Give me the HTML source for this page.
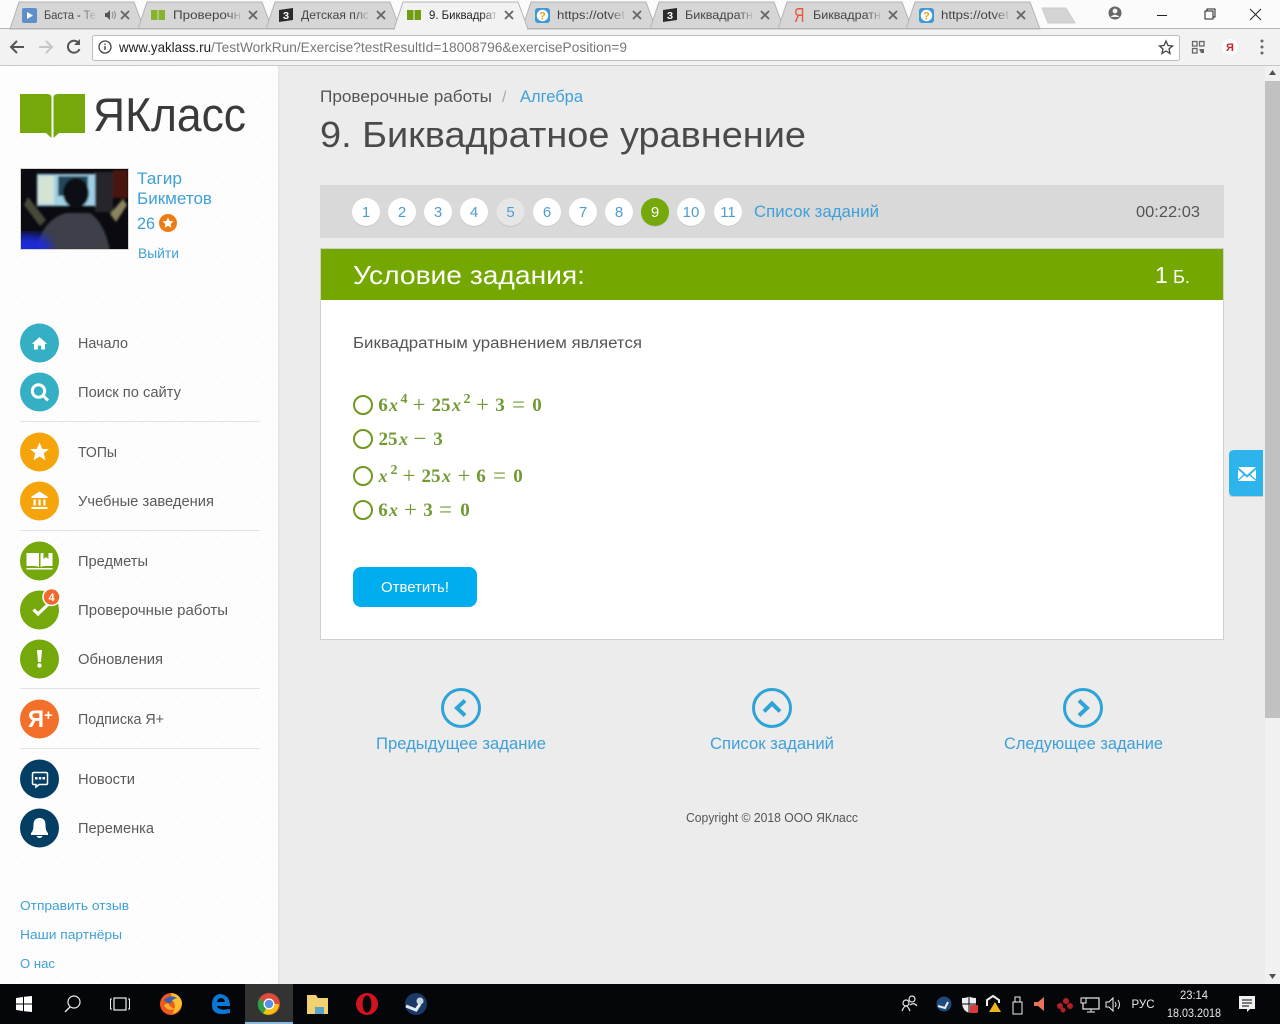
<!DOCTYPE html>
<html lang="ru"><head><meta charset="utf-8"><title>9. Биквадратное уравнение</title>
<style>
html,body{margin:0;padding:0;background:#ececec;overflow:hidden}
svg{display:block}
text{font-family:"Liberation Sans","DejaVu Sans",sans-serif}
.nav{font-size:15px;fill:#5a5a5a}
.lnk{fill:#3fa0d8}
.tab{font-size:12px;fill:#444}
.m{font-family:"Liberation Serif",serif;font-size:19px;font-weight:bold;fill:#729a33;text-anchor:middle}
.mi{font-style:italic;font-size:18px}
.s{font-size:14px}
.o{font-size:23px;font-weight:normal}
.pg{font-size:15px;fill:#4b9fd0;text-anchor:middle}
.tray{fill:#e8e8e8;font-size:12px;text-anchor:middle}
</style></head><body>
<svg width="1280" height="1024" viewBox="0 0 1280 1024" xmlns="http://www.w3.org/2000/svg">
<defs>
<pattern id="dots" width="10" height="10" patternUnits="userSpaceOnUse"><rect width="10" height="10" fill="#fdfdfd"/><rect x="2" y="2" width="1" height="1" fill="#f1f1f1"/><rect x="7" y="7" width="1" height="1" fill="#f1f1f1"/></pattern>
<linearGradient id="fg" x1="0" x2="1" y1="0" y2="0"><stop offset="0" stop-color="#d6d6d6" stop-opacity="0"/><stop offset="1" stop-color="#d6d6d6"/></linearGradient>
<linearGradient id="fa" x1="0" x2="1" y1="0" y2="0"><stop offset="0" stop-color="#f2f2f2" stop-opacity="0"/><stop offset="1" stop-color="#f2f2f2"/></linearGradient>
<linearGradient id="side" x1="0" x2="1" y1="0" y2="0"><stop offset="0" stop-color="#e4e4e4"/><stop offset="1" stop-color="#ececec"/></linearGradient>
<clipPath id="ph"><rect x="21" y="169" width="107" height="80"/></clipPath>
<filter id="b1"><feGaussianBlur stdDeviation="1"/></filter>
<filter id="b3"><feGaussianBlur stdDeviation="5"/></filter>
<g id="x"><path d="M-4-4L4 4M4-4L-4 4" stroke="#666" stroke-width="1.800" fill="none"/></g>
<g id="bk"><rect x="0" y="0" width="6.500" height="10" fill="#85b52a"/><rect x="7.500" y="0" width="6.500" height="10" fill="#85b52a"/></g>
<g id="z3"><path d="M0 2L14 0V12L0 14Z" fill="#2a2a2a"/><text x="7" y="11" font-size="10" font-weight="bold" fill="#fff" text-anchor="middle">З</text></g>
<g id="q"><rect x="0" y="0" width="15" height="15" rx="3" fill="#3d9ad6"/><circle cx="7.500" cy="7.500" r="5.700" fill="#fff"/><text x="7.500" y="11.500" font-size="11" font-weight="bold" fill="#eda21a" text-anchor="middle">?</text></g>
</defs>

<!-- page backgrounds -->
<rect width="1280" height="1024" fill="#ececec"/>
<rect x="0" y="66" width="278" height="918" fill="url(#dots)"/>
<rect x="278" y="66" width="3" height="918" fill="url(#side)"/>

<!-- Browser chrome -->
<rect width="1280" height="66" fill="#f2f2f2"/>
<rect width="1280" height="29" fill="#fbfbfb"/>
<g fill="#d6d6d6" stroke="#b4b4b4" stroke-width="1">
<path d="M10 29L19 2H134L144 29Z"/><path d="M138 29L147 2H262L272 29Z"/><path d="M266 29L275 2H390L400 29Z"/>
<path d="M522 29L531 2H646L656 29Z"/><path d="M650 29L659 2H774L784 29Z"/><path d="M778 29L787 2H902L912 29Z"/><path d="M906 29L915 2H1030L1040 29Z"/>
<path d="M1042 8H1066L1075 23H1048Z" fill="#d4d4d4" stroke="#cccccc"/>
</g>
<rect x="0" y="28" width="1280" height="1" fill="#b4b4b4"/>
<path d="M394 29L403 2H518L528 29Z" fill="#f2f2f2" stroke="#b4b4b4"/>
<rect x="395" y="28" width="132" height="2" fill="#f2f2f2"/>
<rect x="0" y="65" width="1280" height="1" fill="#c8c8c8"/>

<!-- tab favicons -->
<rect x="22" y="8" width="15" height="15" rx="2" fill="#5d8fc9"/><path d="M27 12L33 15.500L27 19Z" fill="#fff"/>
<use href="#bk" x="151" y="10"/><use href="#z3" x="279" y="8"/>
<rect x="407" y="10" width="6.500" height="10" fill="#6f9f10"/><rect x="414.500" y="10" width="6.500" height="10" fill="#6f9f10"/>
<use href="#q" x="535" y="8"/><use href="#z3" x="663" y="8"/>
<text transform="translate(794,22) scale(.72,1)" font-size="20" fill="#e8573c">Я</text>
<use href="#q" x="919" y="8"/>

<!-- tab titles -->
<text class="tab" x="44" y="19" textLength="52" lengthAdjust="spacingAndGlyphs">Баста - Те</text>
<text class="tab" x="173" y="19" textLength="68" lengthAdjust="spacingAndGlyphs">Проверочн</text>
<text class="tab" x="301" y="19" textLength="68" lengthAdjust="spacingAndGlyphs">Детская плс</text>
<text class="tab" x="429" y="19" textLength="68" lengthAdjust="spacingAndGlyphs" style="fill:#222">9. Биквадрат</text>
<text class="tab" x="557" y="19" textLength="68" lengthAdjust="spacingAndGlyphs">https://otvet</text>
<text class="tab" x="685" y="19" textLength="68" lengthAdjust="spacingAndGlyphs">Биквадратн</text>
<text class="tab" x="813" y="19" textLength="68" lengthAdjust="spacingAndGlyphs">Биквадратн</text>
<text class="tab" x="941" y="19" textLength="68" lengthAdjust="spacingAndGlyphs">https://otvet</text>
<rect x="80" y="7" width="17" height="16" fill="url(#fg)"/><rect x="226" y="7" width="17" height="16" fill="url(#fg)"/><rect x="354" y="7" width="17" height="16" fill="url(#fg)"/><rect x="482" y="7" width="17" height="16" fill="url(#fa)"/><rect x="610" y="7" width="17" height="16" fill="url(#fg)"/><rect x="738" y="7" width="17" height="16" fill="url(#fg)"/><rect x="866" y="7" width="17" height="16" fill="url(#fg)"/><rect x="994" y="7" width="17" height="16" fill="url(#fg)"/>
<use href="#x" x="125" y="15"/><use href="#x" x="253" y="15"/><use href="#x" x="381" y="15"/><use href="#x" x="509" y="15"/><use href="#x" x="637" y="15"/><use href="#x" x="765" y="15"/><use href="#x" x="893" y="15"/><use href="#x" x="1021" y="15"/>
<path d="M105 13H107L110 10V20L107 17H105Z" fill="#555"/><path d="M112 12Q114 15 112 18M114 11Q117 15 114 19" stroke="#888" fill="none"/>

<!-- window controls -->
<circle cx="1115" cy="13" r="6.500" fill="#666"/><circle cx="1115" cy="11" r="2.400" fill="#f2f2f2"/><path d="M1110.500 17Q1115 12.500 1119.500 17" fill="#f2f2f2"/>
<rect x="1157" y="15" width="10" height="1" fill="#222"/>
<rect x="1205" y="11" width="8" height="8" fill="none" stroke="#222"/><path d="M1207 11V9H1215V17H1213" fill="none" stroke="#222"/>
<path d="M1250 9L1261 20M1261 9L1250 20" stroke="#222" fill="none"/>

<!-- toolbar -->
<path d="M24 47H11M17 41L11 47L17 53" fill="none" stroke="#555" stroke-width="2"/>
<path d="M39 47H52M46 41L52 47L46 53" fill="none" stroke="#c6c6c6" stroke-width="2"/>
<path d="M79 43.500A6 6 0 1 0 79.500 49" fill="none" stroke="#555" stroke-width="2"/><path d="M80 39V45H74Z" fill="#555"/>
<rect x="92.500" y="35.500" width="1087" height="25" rx="2" fill="#fff" stroke="#bdbdbd"/>
<circle cx="105" cy="47" r="6" fill="none" stroke="#444" stroke-width="1.300"/><rect x="104.300" y="46" width="1.400" height="4" fill="#444"/><rect x="104.300" y="43.500" width="1.400" height="1.400" fill="#444"/>
<text x="119" y="52" font-size="14" fill="#222" textLength="92" lengthAdjust="spacingAndGlyphs">www.yaklass.ru</text>
<text x="211" y="52" font-size="14" fill="#777" textLength="416" lengthAdjust="spacingAndGlyphs">/TestWorkRun/Exercise?testResultId=18008796&amp;exercisePosition=9</text>
<path d="M1166 41L1168 45.500L1172.500 46L1169 49L1170 53.500L1166 51L1162 53.500L1163 49L1159.500 46L1164 45.500Z" fill="none" stroke="#444" stroke-width="1.300"/>
<g fill="none" stroke="#666" stroke-width="1.300"><rect x="1192.500" y="41.500" width="4.500" height="4.500"/><rect x="1199.500" y="41.500" width="4.500" height="4.500"/><rect x="1192.500" y="48.500" width="4.500" height="4.500"/></g><path d="M1199 49H1204V53H1201Z" fill="#666"/>
<circle cx="1230" cy="47" r="8" fill="#fff"/><text x="1230" y="51" font-size="11" font-weight="bold" fill="#c8232c" text-anchor="middle">Я</text>
<g fill="#666"><circle cx="1262" cy="41" r="1.500"/><circle cx="1262" cy="47" r="1.500"/><circle cx="1262" cy="53" r="1.500"/></g>

<!-- Logo -->
<path d="M20 94H47Q51 94 51.500 97V138L46 133H20Z" fill="#74a80b"/><path d="M85 94H58Q54 94 53.500 97V138L59 133H85Z" fill="#74a80b"/>
<text x="93" y="131" font-size="47" fill="#3a3a3a" textLength="153" lengthAdjust="spacingAndGlyphs">ЯКласс</text>

<!-- Profile photo -->
<g clip-path="url(#ph)">
<rect x="21" y="169" width="107" height="80" fill="#0a0a10"/>
<g filter="url(#b1)">
<rect x="95" y="172" width="18" height="40" fill="#26262a"/>
<rect x="113" y="170" width="15" height="28" fill="#4a1410"/>
<rect x="37" y="174" width="58" height="32" fill="#9fd0e4"/>
<rect x="58" y="176" width="30" height="20" fill="#24465a"/>
<rect x="38" y="176" width="16" height="28" fill="#d4e4d4"/>
<ellipse cx="76" cy="193" rx="13" ry="15" fill="#0e1018"/>
<path d="M36 250Q42 220 66 213H90Q104 222 110 250Z" fill="#3c4048"/>
<path d="M28 197L46 220L40 226L24 205Z" fill="#4a4a3a"/>
<path d="M110 214L123 199L127 205L116 222Z" fill="#8a8460"/>
</g>
<ellipse cx="28" cy="248" rx="24" ry="14" fill="#1a2ad8" filter="url(#b3)"/>
<ellipse cx="24" cy="250" rx="14" ry="6" fill="#1a2ad8" filter="url(#b1)"/>
</g>
<rect x="20.500" y="168.500" width="108" height="81" fill="none" stroke="#d8d4ce"/>

<text class="lnk" x="137" y="184" font-size="17" textLength="45" lengthAdjust="spacingAndGlyphs">Тагир</text>
<text class="lnk" x="137" y="204" font-size="17" textLength="75" lengthAdjust="spacingAndGlyphs">Бикметов</text>
<text class="lnk" x="137" y="229" font-size="17" textLength="18" lengthAdjust="spacingAndGlyphs">26</text>
<circle cx="168" cy="223" r="9" fill="#ec7d16"/>
<path d="M168 217.500L169.600 221L173.500 221.400L170.600 224L171.400 227.800L168 225.800L164.600 227.800L165.400 224L162.500 221.400L166.400 221Z" fill="#fff"/>
<text class="lnk" x="138" y="258" font-size="13.500" textLength="41" lengthAdjust="spacingAndGlyphs">Выйти</text>

<!-- Sidebar nav -->
<g>
<circle cx="39.500" cy="343" r="19.500" fill="#35afc4"/>
<path transform="translate(39.500,343.500) scale(.85)" d="M0-7.500L9 .5H6.500V7H2V2.500H-2V7H-6.500V.5H-9Z" fill="#fff"/>
<circle cx="39.500" cy="392" r="19.500" fill="#35afc4"/>
<circle cx="38.500" cy="391" r="6.200" fill="none" stroke="#fff" stroke-width="3"/><path d="M43.500 396L48 400.500" stroke="#fff" stroke-width="3" fill="none"/>
<circle cx="39.500" cy="452" r="19.500" fill="#f5a40c"/>
<path transform="translate(39.500,452)" d="M0-9.500L2.800-3H9.500L4.300 1.300L6 8.200L0 4.500L-6 8.200L-4.300 1.300L-9.500-3H-2.800Z" fill="#fff"/>
<circle cx="39.500" cy="501" r="19.500" fill="#f5a40c"/>
<path transform="translate(39.500,500.500)" d="M0-9L8-4V-2.500H-8V-4ZM-6-1H-3.800V5H-6ZM-1.100-1H1.100V5H-1.100ZM3.800-1H6V5H3.800ZM-8 6.500H8V8.500H-8Z" fill="#fff"/>
<circle cx="39.500" cy="561" r="19.500" fill="#74a80b"/>
<path transform="translate(39.500,561)" d="M-13-8H-1.500Q-.5-8-.5-7V6Q-3 5-6 5H-13ZM1-7Q1-8 2-8H4V-2L6.500-4L9-2V-8H13V5H6Q3 5 1 6ZM-13 7H13V8.500H-13Z" fill="#fff"/>
<circle cx="39.500" cy="610" r="19.500" fill="#74a80b"/>
<path d="M33.500 609.500L38 614L48 604.500" fill="none" stroke="#fff" stroke-width="3.200"/>
<circle cx="51.500" cy="597" r="8.500" fill="#ef6a2b" stroke="#fff" stroke-width="1.500"/>
<text x="51.500" y="601" font-size="11" font-weight="bold" fill="#fff" text-anchor="middle">4</text>
<circle cx="39.500" cy="659" r="19.500" fill="#74a80b"/>
<path d="M37 650H42L41 662H38Z" fill="#fff"/><circle cx="39.500" cy="665.500" r="2.200" fill="#fff"/>
<circle cx="39.500" cy="719" r="19.500" fill="#f2702a"/>
<text x="28" y="727" font-size="24" font-weight="bold" fill="#fff" textLength="16" lengthAdjust="spacingAndGlyphs">Я</text><text x="44" y="720" font-size="15" font-weight="bold" fill="#fff">+</text>
<circle cx="39.500" cy="779" r="19.500" fill="#053e63"/>
<path d="M34 772.500H46Q47.500 772.500 47.500 774V783Q47.500 784.500 46 784.500H39L36 787V784.500H34Q32.500 784.500 32.500 783V774Q32.500 772.500 34 772.500Z" fill="none" stroke="#fff" stroke-width="1.500"/>
<rect x="35" y="777" width="2.500" height="2.500" fill="#fff"/><rect x="38.800" y="777" width="2.500" height="2.500" fill="#fff"/><rect x="42.500" y="777" width="2.500" height="2.500" fill="#fff"/>
<circle cx="39.500" cy="828" r="19.500" fill="#053e63"/>
<path transform="translate(39.500,828)" d="M0-10Q6-10 6-3Q6 3 8.500 5V7H-8.500V5Q-6 3-6-3Q-6-10 0-10ZM-3 8H3Q2 10 0 10Q-2 10-3 8Z" fill="#fff"/>
</g>
<text class="nav" x="78" y="348" textLength="50" lengthAdjust="spacingAndGlyphs">Начало</text>
<text class="nav" x="78" y="397" textLength="103" lengthAdjust="spacingAndGlyphs">Поиск по сайту</text>
<text class="nav" x="78" y="457" textLength="39" lengthAdjust="spacingAndGlyphs">ТОПы</text>
<text class="nav" x="78" y="506" textLength="136" lengthAdjust="spacingAndGlyphs">Учебные заведения</text>
<text class="nav" x="78" y="566" textLength="70" lengthAdjust="spacingAndGlyphs">Предметы</text>
<text class="nav" x="78" y="615" textLength="150" lengthAdjust="spacingAndGlyphs">Проверочные работы</text>
<text class="nav" x="78" y="664" textLength="85" lengthAdjust="spacingAndGlyphs">Обновления</text>
<text class="nav" x="78" y="724" textLength="86" lengthAdjust="spacingAndGlyphs">Подписка Я+</text>
<text class="nav" x="78" y="784" textLength="57" lengthAdjust="spacingAndGlyphs">Новости</text>
<text class="nav" x="78" y="833" textLength="76" lengthAdjust="spacingAndGlyphs">Переменка</text>
<g fill="#e2e2e2"><rect x="20" y="421" width="240" height="1"/><rect x="20" y="530" width="240" height="1"/><rect x="20" y="688" width="240" height="1"/><rect x="20" y="748" width="240" height="1"/></g>
<text class="lnk" x="20" y="910" font-size="13" textLength="109" lengthAdjust="spacingAndGlyphs">Отправить отзыв</text>
<text class="lnk" x="20" y="939" font-size="13" textLength="102" lengthAdjust="spacingAndGlyphs">Наши партнёры</text>
<text class="lnk" x="20" y="968" font-size="13" textLength="35" lengthAdjust="spacingAndGlyphs">О нас</text>

<!-- Main -->
<text x="320" y="102" font-size="16.500" fill="#555" textLength="172" lengthAdjust="spacingAndGlyphs">Проверочные работы</text>
<text x="502" y="102" font-size="16" fill="#aaa">/</text>
<text class="lnk" x="520" y="102" font-size="16.500" textLength="63" lengthAdjust="spacingAndGlyphs">Алгебра</text>
<text x="320" y="147" font-size="36" fill="#4a4a4a" textLength="486" lengthAdjust="spacingAndGlyphs">9. Биквадратное уравнение</text>

<rect x="320" y="185" width="904" height="53" fill="#d9d9d9"/>
<g fill="#c6c6c6"><circle cx="366" cy="213" r="14"/><circle cx="402" cy="213" r="14"/><circle cx="438" cy="213" r="14"/><circle cx="474" cy="213" r="14"/><circle cx="510.500" cy="213" r="14"/><circle cx="547" cy="213" r="14"/><circle cx="583" cy="213" r="14"/><circle cx="619" cy="213" r="14"/><circle cx="655" cy="213" r="14"/><circle cx="691" cy="213" r="14"/><circle cx="728" cy="213" r="14"/></g>
<g fill="#fff"><circle cx="366" cy="212" r="14"/><circle cx="402" cy="212" r="14"/><circle cx="438" cy="212" r="14"/><circle cx="474" cy="212" r="14"/><circle cx="547" cy="212" r="14"/><circle cx="583" cy="212" r="14"/><circle cx="619" cy="212" r="14"/><circle cx="691" cy="212" r="14"/><circle cx="728" cy="212" r="14"/></g>
<circle cx="510.500" cy="212" r="14" fill="#e6e6e6"/><circle cx="655" cy="212" r="14" fill="#74a80b"/>
<text class="pg" x="366" y="217">1</text><text class="pg" x="402" y="217">2</text><text class="pg" x="438" y="217">3</text><text class="pg" x="474" y="217">4</text><text class="pg" x="510.500" y="217">5</text><text class="pg" x="547" y="217">6</text><text class="pg" x="583" y="217">7</text><text class="pg" x="619" y="217">8</text><text class="pg" x="655" y="217" style="fill:#fff">9</text><text class="pg" x="691" y="217">10</text><text class="pg" x="728" y="217">11</text>
<text class="lnk" x="754" y="217" font-size="16.500" textLength="125" lengthAdjust="spacingAndGlyphs">Список заданий</text>
<text x="1136" y="217" font-size="16" fill="#555" textLength="64" lengthAdjust="spacingAndGlyphs">00:22:03</text>

<rect x="320.500" y="248.500" width="903" height="391" fill="#fff" stroke="#cfcfcf"/>
<rect x="321" y="249" width="902" height="51" fill="#74a800"/>
<text x="353" y="284" font-size="26" fill="#fff" textLength="232" lengthAdjust="spacingAndGlyphs">Условие задания:</text>
<text x="1155" y="283" font-size="23" fill="#fff">1</text>
<text x="1173" y="283" font-size="18" fill="#fff" textLength="17" lengthAdjust="spacingAndGlyphs">Б.</text>
<text x="353" y="348" font-size="15.500" fill="#555" textLength="289" lengthAdjust="spacingAndGlyphs">Биквадратным уравнением является</text>

<g fill="none" stroke="#6f9a1e" stroke-width="2"><circle cx="363" cy="405" r="9"/><circle cx="363" cy="439" r="9"/><circle cx="363" cy="476" r="9"/><circle cx="363" cy="510" r="9"/></g>
<text class="m" x="383" y="411">6</text><text class="m mi" x="393.500" y="411">x</text><text class="m s" x="404" y="403">4</text><text class="m o" x="419" y="412">+</text><text class="m" x="441" y="411">25</text><text class="m mi" x="456.500" y="411">x</text><text class="m s" x="467" y="403">2</text><text class="m o" x="482.500" y="412">+</text><text class="m" x="500" y="411">3</text><text class="m o" x="518.500" y="412">=</text><text class="m" x="537" y="411">0</text>
<text class="m" x="388" y="445">25</text><text class="m mi" x="403.500" y="445">x</text><text class="m o" x="420" y="446">−</text><text class="m" x="438" y="445">3</text>
<text class="m mi" x="383" y="482">x</text><text class="m s" x="394" y="474">2</text><text class="m o" x="409" y="483">+</text><text class="m" x="431" y="482">25</text><text class="m mi" x="446.500" y="482">x</text><text class="m o" x="464" y="483">+</text><text class="m" x="481" y="482">6</text><text class="m o" x="499.500" y="483">=</text><text class="m" x="518" y="482">0</text>
<text class="m" x="383" y="516">6</text><text class="m mi" x="393.500" y="516">x</text><text class="m o" x="410.500" y="517">+</text><text class="m" x="428" y="516">3</text><text class="m o" x="445.500" y="517">=</text><text class="m" x="465" y="516">0</text>

<rect x="353" y="567" width="124" height="40" rx="8" fill="#00aeef"/>
<text x="415" y="592" font-size="14.500" fill="#fff" text-anchor="middle" textLength="68" lengthAdjust="spacingAndGlyphs">Ответить!</text>

<!-- Prev / list / next -->
<g fill="none" stroke="#2ea3d8" stroke-width="3">
<circle cx="461" cy="708" r="18.500"/><circle cx="772" cy="708" r="18.500"/><circle cx="1083" cy="708" r="18.500"/>
<path d="M465 700.500L457 708L465 715.500" stroke-width="4"/><path d="M764 711.500L772 703.500L780 711.500" stroke-width="4"/><path d="M1079 700.500L1087 708L1079 715.500" stroke-width="4"/>
</g>
<text class="lnk" x="376" y="749" font-size="16.500" textLength="170" lengthAdjust="spacingAndGlyphs">Предыдущее задание</text>
<text class="lnk" x="710" y="749" font-size="16.500" textLength="124" lengthAdjust="spacingAndGlyphs">Список заданий</text>
<text class="lnk" x="1004" y="749" font-size="16.500" textLength="159" lengthAdjust="spacingAndGlyphs">Следующее задание</text>
<text x="686" y="822" font-size="12.500" fill="#555" textLength="172" lengthAdjust="spacingAndGlyphs">Copyright © 2018 ООО ЯКласс</text>

<!-- Mail tab -->
<path d="M1263 452H1233Q1229 452 1229 456V494Q1229 497 1233 497H1263Z" fill="#c9c9c9"/>
<path d="M1263 450H1234Q1229 450 1229 455V491Q1229 496 1234 496H1263Z" fill="#2eb4ec"/>
<path d="M1238 467H1256L1247 475ZM1238 469.500L1243.500 474.500L1238 479.500ZM1256 469.500L1250.500 474.500L1256 479.500ZM1244.500 475.500L1247 477.500L1249.500 475.500L1256 481H1238Z" fill="#fff"/>

<!-- Scrollbar -->
<rect x="1265" y="66" width="15" height="918" fill="#f1f1f1"/>
<rect x="1265" y="81" width="15" height="637" fill="#c1c1c1"/>
<path d="M1272.500 70L1276 75H1269Z" fill="#505050"/><path d="M1272.500 979L1276 974H1269Z" fill="#505050"/>

<!-- Taskbar -->
<rect x="0" y="984" width="1280" height="40" fill="#05060a"/>
<path d="M16 998L23 997V1003.500H16ZM24 996.800L32 996V1003.500H24ZM16 1004.500H23V1011L16 1010ZM24 1004.500H32V1012L24 1011.200Z" fill="#fff"/>
<circle cx="74" cy="1002" r="6" fill="none" stroke="#eee" stroke-width="1.200"/><path d="M70 1007L65 1012" stroke="#eee" stroke-width="1.300"/>
<rect x="114" y="998" width="12" height="12" fill="none" stroke="#eee" stroke-width="1.200"/><path d="M112 999H110.500V1009H112M128 999H129.500V1009H128" fill="none" stroke="#eee"/>
<circle cx="171" cy="1004" r="11" fill="#ee5a1e"/><path d="M171 993A11 11 0 0 1 182 1004Q180 1012 172 1014Q178 1006 172 1000Z" fill="#fbc02d"/><path d="M164 1000Q170 994 177 998Q172 999 171 1003Q167 1004 164 1000Z" fill="#3c5fb0"/><path d="M164 1005Q167 1012 176 1009Q170 1008 168 1003Z" fill="#fbb02d"/>
<path d="M212 1005Q212 995 220 994Q230 995 230 1006H217Q218 1011 230 1009V1013Q212 1017 212 1005ZM217 1002H225Q224 998 221 998Q218 998 217 1002Z" fill="#0a78d7"/>
<rect x="245" y="984" width="48" height="38" fill="#333"/><rect x="245" y="1022" width="48" height="2" fill="#8cb9e0"/>
<circle cx="269" cy="1004" r="11" fill="#dd4b3a"/><path d="M269 1004L279 1004A11 11 0 0 1 263 1013.500Z" fill="#f4c20d"/><path d="M269 1004L263 1013.500A11 11 0 0 1 259 999Z" fill="#2f9e47"/><circle cx="269" cy="1004" r="5.500" fill="#fff"/><circle cx="269" cy="1004" r="4.200" fill="#5a8fe8"/>
<path d="M307 995H316L318 998H328V1014H307Z" fill="#f1d273"/><rect x="315" y="1007" width="9" height="7" fill="#5aa5c8"/>
<circle cx="367" cy="1004" r="11" fill="#d3131f"/><ellipse cx="367" cy="1004" rx="4.500" ry="8.500" fill="#05060a"/>
<circle cx="416" cy="1004" r="11" fill="#1a3a66"/><circle cx="420" cy="1001" r="3.500" fill="#c8d4e0"/><path d="M406 1006L416 1010L420 1004" stroke="#e4e8ee" stroke-width="3" fill="none"/>

<!-- Tray -->
<g fill="none" stroke="#e8e8e8" stroke-width="1.200"><circle cx="912" cy="999" r="3"/><circle cx="906" cy="1003" r="3"/><path d="M902 1011Q904 1006 906 1006Q908 1006 910 1011M910 1005Q914 1002 917 1006"/></g>
<circle cx="944" cy="1004" r="7.500" fill="#1e4a7c"/><path d="M938 1006L945 1008L948 1002" stroke="#eee" stroke-width="2" fill="none"/>
<path d="M962 998Q968 998 969 996Q971 998 976 998V1004Q975 1011 969 1013Q963 1011 962 1004Z" fill="#eee"/><path d="M969 996V1013M962 1004H976" stroke="#05060a"/><rect x="970" y="1005" width="8" height="8" rx="1" fill="#d93a3a"/>
<path d="M987 1006V1000L993 996L999 1000V1003" stroke="#eee" stroke-width="2" fill="none"/><path d="M995 1002L1001 1012H989Z" fill="#f0b420"/>
<path d="M1013 1002H1022V1014H1013Z" fill="none" stroke="#eee"/><rect x="1015" y="997" width="5" height="5" fill="none" stroke="#eee"/>
<path d="M1034 1002H1038L1044 997V1011L1038 1006H1034Z" fill="#e8735a"/>
<g fill="#b21f24"><circle cx="1060" cy="1006" r="3"/><circle cx="1066" cy="1001" r="3"/><circle cx="1070" cy="1006" r="3"/><circle cx="1063" cy="1010" r="2.500"/></g>
<rect x="1083" y="998" width="16" height="11" fill="none" stroke="#eee" stroke-width="1.200"/><rect x="1081" y="998" width="5" height="5" fill="#05060a" stroke="#eee"/><path d="M1091 1009V1012M1087 1012H1095" stroke="#eee" fill="none"/>
<path d="M1106 1002H1109L1113 998V1011L1109 1007H1106Z" fill="none" stroke="#eee"/><path d="M1115 1002Q1117 1004.500 1115 1007M1118 1000Q1121 1004.500 1118 1009" stroke="#eee" fill="none"/>
<text class="tray" x="1143" y="1008" textLength="23" lengthAdjust="spacingAndGlyphs">РУС</text>
<text class="tray" x="1194" y="999" textLength="28" lengthAdjust="spacingAndGlyphs">23:14</text>
<text class="tray" x="1194" y="1017" textLength="54" lengthAdjust="spacingAndGlyphs">18.03.2018</text>
<path d="M1239 996H1255V1009H1250L1247 1012V1009H1239Z" fill="#f0f0f0"/><path d="M1242 1000H1252M1242 1003H1252M1242 1006H1249" stroke="#05060a"/>
</svg>
</body></html>
